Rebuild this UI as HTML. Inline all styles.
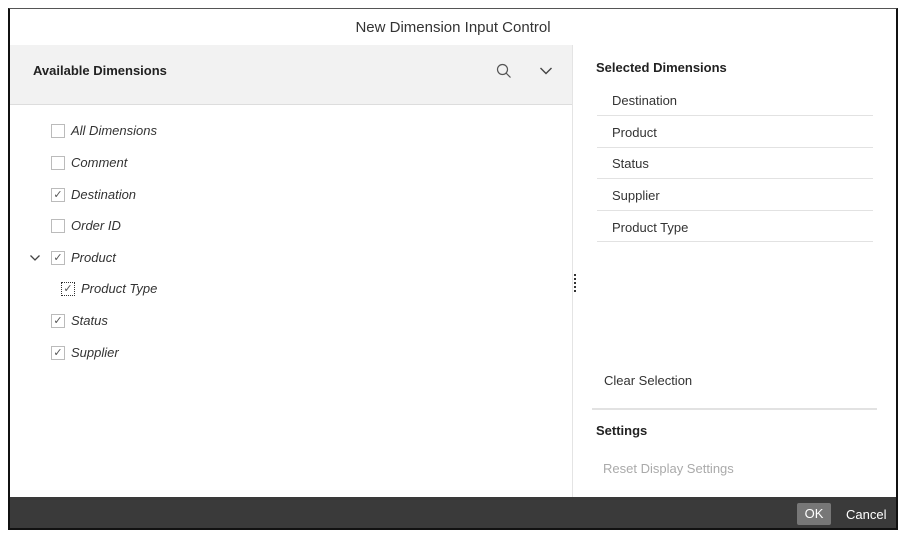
<!DOCTYPE html>
<html><head><style>
*{margin:0;padding:0;box-sizing:border-box}
body{width:909px;height:540px;background:#fff;font-family:"Liberation Sans",sans-serif;position:relative;overflow:hidden}
.frame{position:absolute;left:8px;top:8px;width:890px;height:522px;border:2px solid #111;border-top:1px solid #555;background:#fff}
.a{position:absolute;white-space:nowrap}
.title{left:0;right:0;top:10px;text-align:center;font-size:15px;color:#333}
.hdr{position:absolute;left:0;top:36px;width:562px;height:60px;background:#f2f2f2;border-bottom:1px solid #ddd}
.vdiv{position:absolute;left:562px;top:36px;width:1px;height:454px;background:#e4e4e4}
.it{font-style:italic;font-size:13px;color:#333}
.cb{position:absolute;width:14px;height:14px;border:1px solid #bbb;background:#fff;font-size:11px;line-height:12px;text-align:center;color:#555}
.sel{font-size:13px;color:#333}
.ln{position:absolute;left:587px;width:276px;height:1px;background:#e2e2e2}
.foot{position:absolute;left:0;bottom:0;width:100%;height:31px;background:#3a3a3a}
</style></head><body>
<div class="frame">
<div class="a title">New Dimension Input Control</div>
<div class="hdr"></div>
<div class="vdiv"></div>
<div class="a" style="left:23px;top:54px;font-size:13px;font-weight:bold;color:#222">Available Dimensions</div>
<svg class="a" style="left:486px;top:54px" width="16" height="16" viewBox="0 0 16 16"><circle cx="6.5" cy="6.5" r="5" fill="none" stroke="#555" stroke-width="1.2"/><path d="M10 10l4.5 4.5" stroke="#555" stroke-width="1.2"/></svg>
<svg class="a" style="left:529px;top:57px" width="14" height="10" viewBox="0 0 14 10"><path d="M1.5 2l5.5 5.5 5.5-5.5" fill="none" stroke="#444" stroke-width="1.4"/></svg>

<div class="cb" style="left:41px;top:115px"></div><div class="a it" style="left:61px;top:114px">All Dimensions</div>
<div class="cb" style="left:41px;top:147px"></div><div class="a it" style="left:61px;top:146px">Comment</div>
<div class="cb" style="left:41px;top:179px">✓</div><div class="a it" style="left:61px;top:178px">Destination</div>
<div class="cb" style="left:41px;top:210px"></div><div class="a it" style="left:61px;top:209px">Order ID</div>
<svg class="a" style="left:19px;top:245px" width="12" height="8" viewBox="0 0 12 8"><path d="M1.5 1.5l4.5 4.5 4.5-4.5" fill="none" stroke="#444" stroke-width="1.3"/></svg>
<div class="cb" style="left:41px;top:242px">✓</div><div class="a it" style="left:61px;top:241px">Product</div>
<div class="cb" style="left:51px;top:273px;border:1px dotted #333">✓</div><div class="a it" style="left:71px;top:272px">Product Type</div>
<div class="cb" style="left:41px;top:305px">✓</div><div class="a it" style="left:61px;top:304px">Status</div>
<div class="cb" style="left:41px;top:337px">✓</div><div class="a it" style="left:61px;top:336px">Supplier</div>

<div class="a" style="left:564px;top:265px;width:2px;height:18px;background:repeating-linear-gradient(#333 0 2px,transparent 2px 4px)"></div>

<div class="a" style="left:586px;top:51px;font-size:13px;font-weight:bold;color:#222">Selected Dimensions</div>
<div class="a sel" style="left:602px;top:84px">Destination</div><div class="ln" style="top:106px"></div>
<div class="a sel" style="left:602px;top:116px">Product</div><div class="ln" style="top:138px"></div>
<div class="a sel" style="left:602px;top:147px">Status</div><div class="ln" style="top:169px"></div>
<div class="a sel" style="left:602px;top:179px">Supplier</div><div class="ln" style="top:201px"></div>
<div class="a sel" style="left:602px;top:211px">Product Type</div><div class="ln" style="top:232px"></div>

<div class="a sel" style="left:594px;top:364px">Clear Selection</div>
<div class="a" style="left:582px;top:399px;width:285px;height:2px;background:#e2e2e2"></div>
<div class="a" style="left:586px;top:414px;font-size:13px;font-weight:bold;color:#222">Settings</div>
<div class="a" style="left:593px;top:452px;font-size:13px;color:#aaa">Reset Display Settings</div>

<div class="foot">
<div class="a" style="left:787px;top:6px;width:34px;height:22px;background:#777;border-radius:2px;color:#fff;font-size:13px;text-align:center;line-height:22px">OK</div>
<div class="a" style="left:836px;top:10px;color:#fff;font-size:13px">Cancel</div>
</div>
</div>
</body></html>
